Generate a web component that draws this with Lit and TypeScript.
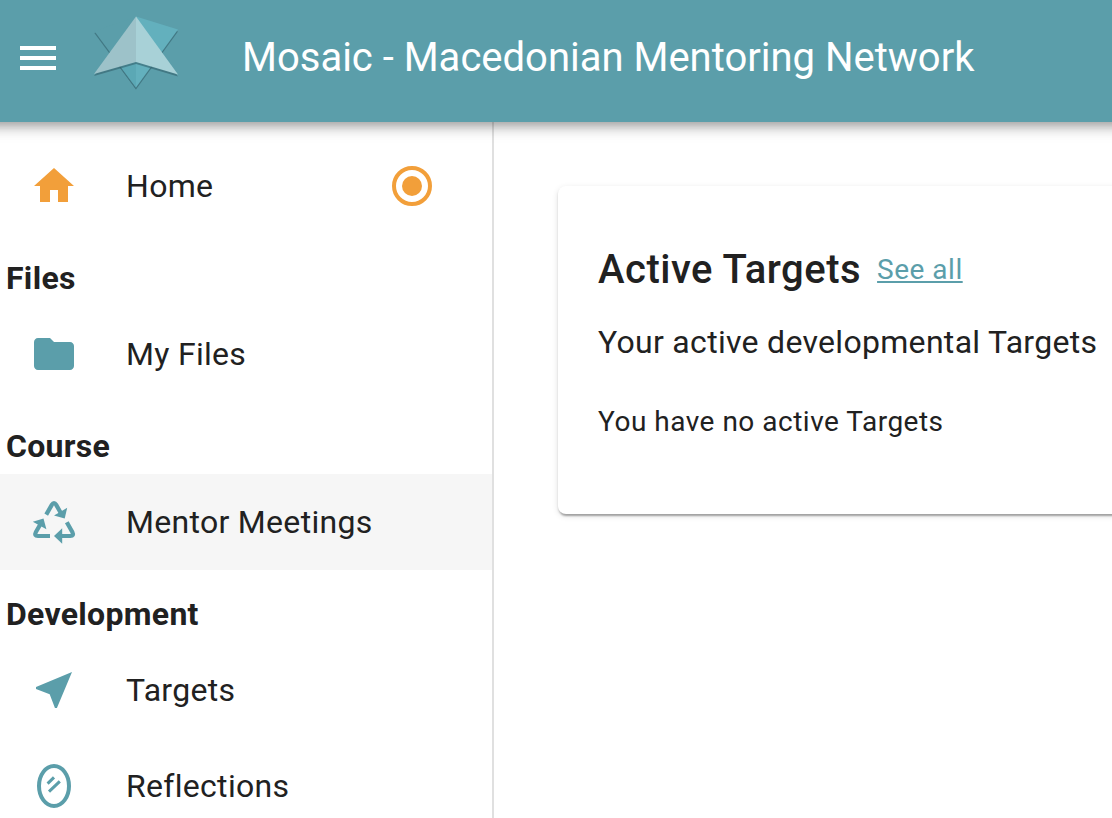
import { LitElement, html, css, svg, nothing, type TemplateResult } from 'lit';
import { customElement, property } from 'lit/decorators.js';

type IconName = 'menu' | 'home' | 'radio' | 'folder' | 'recycle' | 'near-me' | 'mirror';

const icons: Record<IconName, TemplateResult> = {
  menu: svg`<path d="M6 36h36v-4H6v4zm0-10h36v-4H6v4zm0-14v4h36v-4H6z" />`,
  home: svg`<path d="M20 40V28h8v12h10V24h6L24 6 4 24h6v16z" />`,
  radio: svg`
    <circle cx="24" cy="24" r="18" fill="none" stroke="currentColor" stroke-width="4" />
    <circle cx="24" cy="24" r="10" />
  `,
  folder: svg`<path d="M20 8H8c-2.200 0-3.980 1.800-3.980 4L4 36c0 2.200 1.800 4 4 4h32c2.200 0 4-1.800 4-4V16c0-2.200-1.800-4-4-4H24l-4-4z" />`,
  recycle: svg`
    <g fill="none" stroke="currentColor" stroke-width="4.200" stroke-linejoin="round">
      <path d="M16.200 16.600 21.800 6.900q2.200-3.800 4.400 0l5.200 9.100" />
      <path d="M11.400 24.500 5.900 34q-2 4 2 4H20" />
      <path d="M36.800 24.200 42.300 34q2 4-2 4H31" />
    </g>
    <path d="M37.200 9.800 34.700 20.600 24 17.600z" />
    <path d="M2.800 23.700 13.500 20.400 16.400 31.200z" />
    <path d="M32.200 30.200v15.600L24 38z" />
  `,
  'near-me': svg`<path d="M42 6 6 21.060v1.960l13.680 5.300L24.960 42h1.960L42 6z" />`,
  mirror: svg`
    <g fill="none" stroke="currentColor">
      <ellipse cx="24" cy="24" rx="15" ry="20" stroke-width="4" />
      <path d="M17.600 21.600 24 15.400M19 29.700 29.800 19.300" stroke-width="3" />
    </g>
  `,
};

interface NavItem {
  label: string;
  icon: IconName;
  accent?: boolean;
  selected?: boolean;
}

interface NavSection {
  title?: string;
  items: NavItem[];
}

const sections: NavSection[] = [
  { items: [{ label: 'Home', icon: 'home', accent: true }] },
  { title: 'Files', items: [{ label: 'My Files', icon: 'folder' }] },
  { title: 'Course', items: [{ label: 'Mentor Meetings', icon: 'recycle', selected: true }] },
  {
    title: 'Development',
    items: [
      { label: 'Targets', icon: 'near-me' },
      { label: 'Reflections', icon: 'mirror' },
    ],
  },
];

/** A 48px icon, filled with the current text colour. */
@customElement('app-icon')
export class AppIcon extends LitElement {
  static styles = css`
    :host {
      display: block;
      flex: none;
      width: 48px;
      height: 48px;
    }

    svg {
      display: block;
      width: 100%;
      height: 100%;
      fill: currentColor;
    }
  `;

  @property() name: IconName = 'home';

  render() {
    return html`<svg viewBox="0 0 48 48" aria-hidden="true">${icons[this.name]}</svg>`;
  }
}

/** The folded paper star in the app bar. */
@customElement('app-logo')
export class AppLogo extends LitElement {
  static styles = css`
    :host {
      display: block;
      flex: none;
      width: 112px;
      height: 100px;
    }

    svg {
      display: block;
    }

    .fold {
      filter: drop-shadow(0 2px 0.500px rgba(45, 90, 100, 0.550));
    }
  `;

  render() {
    return html`
      <svg width="112" height="100" viewBox="0 0 112 100" aria-hidden="true">
        <g class="fold">
          <path fill="#5b9eaa" d="M56 13 14.300 27 56 83.500z" />
          <path fill="#63b0bd" d="M56 12.500 98 25.500 56 83.500z" />
          <path fill="#5ba8b5" d="M56 50v33.500L36 56.400z" />
        </g>
        <g class="fold">
          <path fill="#9dc2c9" d="M56 12.500 14 70 56 58z" />
          <path fill="#a8d1d7" d="M56 12.500 98 70.500 56 58z" />
        </g>
      </svg>
    `;
  }
}

@customElement('app-nav')
export class AppNav extends LitElement {
  static styles = css`
    :host {
      display: block;
      box-sizing: border-box;
      padding-top: 16px;
      border-right: 2px solid #e0e0e0;
      overflow: hidden;
    }

    .title {
      margin: 0;
      padding: 16px 6px 0;
      font-size: 32px;
      font-weight: 700;
      line-height: 56px;
      letter-spacing: 0.300px;
    }

    .item {
      display: flex;
      align-items: center;
      box-sizing: border-box;
      height: 96px;
      padding: 0 56px 0 30px;
      color: inherit;
      text-decoration: none;
    }

    .item.selected {
      background: #f6f6f6;
    }

    .icon {
      color: #5b9eaa;
    }

    .accent {
      color: #f29f3a;
    }

    .label {
      flex: 1;
      padding-left: 48px;
      letter-spacing: 0.300px;
    }
  `;

  private _renderItem(item: NavItem) {
    return html`
      <a class="item ${item.selected ? 'selected' : ''}">
        <app-icon class=${item.accent ? 'accent' : 'icon'} .name=${item.icon}></app-icon>
        <span class="label">${item.label}</span>
        ${item.accent ? html`<app-icon class="accent" name="radio"></app-icon>` : nothing}
      </a>
    `;
  }

  render() {
    return sections.map(
      (section) => html`
        ${section.title ? html`<h2 class="title">${section.title}</h2>` : nothing}
        ${section.items.map((item) => this._renderItem(item))}
      `,
    );
  }
}

@customElement('app-root')
export class AppRoot extends LitElement {
  static styles = css`
    :host {
      display: flex;
      flex-direction: column;
      width: 100vw;
      height: 100vh;
      overflow: hidden;
      background: #fff;
      color: #212121;
      font-family: Roboto, 'Liberation Sans', sans-serif;
      font-size: 32px;
      line-height: 48px;
    }

    header {
      display: flex;
      flex: none;
      align-items: flex-start;
      box-sizing: border-box;
      height: 122px;
      z-index: 1;
      margin: 0 -40px;
      padding: 4px 54px;
      background: #5b9eaa;
      color: #fff;
      box-shadow:
        0 4px 8px -2px rgba(0, 0, 0, 0.200),
        0 8px 10px 0 rgba(0, 0, 0, 0.140),
        0 2px 20px 0 rgba(0, 0, 0, 0.120);
    }

    .menu {
      margin: 30px 18px 0 0;
    }

    .name {
      margin: 22px 0 0 50px;
      font-size: 40px;
      font-weight: 400;
      line-height: 64px;
      white-space: nowrap;
    }

    .body {
      display: grid;
      grid-template-columns: 494px 1fr;
      flex: 1;
      min-height: 0;
    }

    main {
      min-width: 0;
      padding: 64px 0 0 64px;
    }

    .card {
      box-sizing: border-box;
      width: 720px;
      height: 328px;
      padding: 52px 40px;
      border-radius: 8px;
      background: #fff;
      box-shadow:
        0 4px 2px -2px rgba(0, 0, 0, 0.200),
        0 2px 2px 0 rgba(0, 0, 0, 0.140),
        0 2px 6px 0 rgba(0, 0, 0, 0.120);
      white-space: nowrap;
    }

    .heading {
      display: flex;
      align-items: center;
      gap: 16px;
    }

    h1 {
      margin: 0;
      font-size: 40px;
      font-weight: 500;
      line-height: 64px;
      letter-spacing: 0.500px;
    }

    .link {
      color: #5b9eaa;
      font-size: 28px;
      letter-spacing: 0.500px;
      text-decoration: underline;
    }

    .intro {
      margin: 16px 0 0;
      letter-spacing: 0.300px;
    }

    .empty {
      margin: 36px 0 0;
      font-size: 28px;
      line-height: 40px;
      letter-spacing: 0.500px;
    }
  `;

  render() {
    return html`
      <header>
        <app-icon class="menu" name="menu"></app-icon>
        <app-logo></app-logo>
        <span class="name">Mosaic - Macedonian Mentoring Network</span>
      </header>
      <div class="body">
        <app-nav></app-nav>
        <main>
          <section class="card">
            <div class="heading">
              <h1>Active Targets</h1>
              <a class="link">See all</a>
            </div>
            <p class="intro">Your active developmental Targets</p>
            <p class="empty">You have no active Targets</p>
          </section>
        </main>
      </div>
    `;
  }
}

declare global {
  interface HTMLElementTagNameMap {
    'app-icon': AppIcon;
    'app-logo': AppLogo;
    'app-nav': AppNav;
    'app-root': AppRoot;
  }
}
